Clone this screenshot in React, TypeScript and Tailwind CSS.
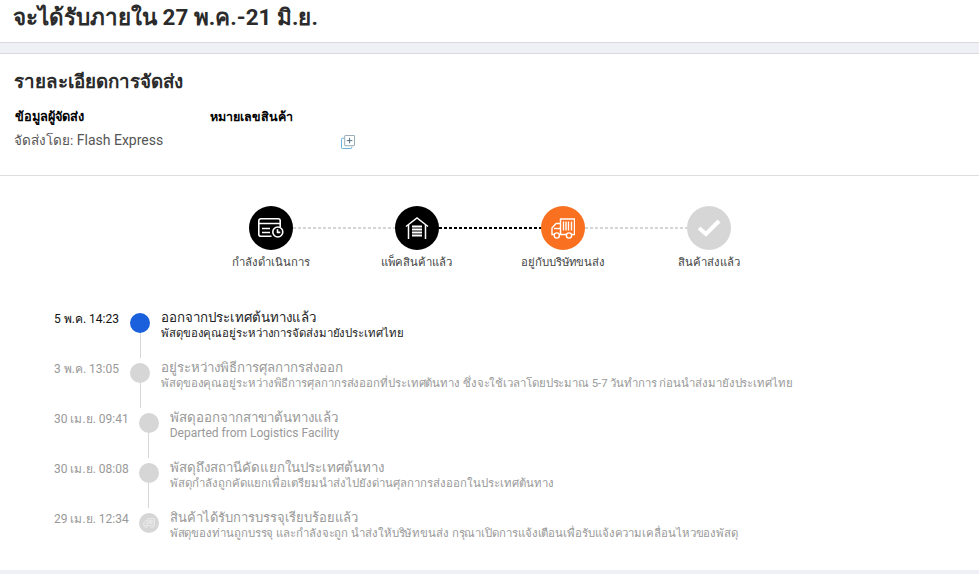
import React from 'react';

type TrackItem = {
  time: string;
  title: string;
  detail: string;
  titleClass?: string;
  detailClass?: string;
  active?: boolean;
  truck?: boolean;
};

const items: TrackItem[] = [
  {
    time: '5 พ.ค. 14:23',
    title: 'ออกจากประเทศต้นทางแล้ว',
    detail: 'พัสดุของคุณอยู่ระหว่างการจัดส่งมายังประเทศไทย',
    detailClass: 'text-[11.4px] tracking-[-0.1px]',
    active: true,
  },
  {
    time: '3 พ.ค. 13:05',
    title: 'อยู่ระหว่างพิธีการศุลกากรส่งออก',
    detail: 'พัสดุของคุณอยู่ระหว่างพิธีการศุลกากรส่งออกที่ประเทศต้นทาง ซึ่งจะใช้เวลาโดยประมาณ 5-7 วันทำการ ก่อนนำส่งมายังประเทศไทย',
    detailClass: 'text-[11.4px] tracking-[-0.09px]',
  },
  {
    time: '30 เม.ย. 09:41',
    title: 'พัสดุออกจากสาขาต้นทางแล้ว',
    detail: 'Departed from Logistics Facility',
    detailClass: 'text-[12px]',
  },
  {
    time: '30 เม.ย. 08:08',
    title: 'พัสดุถึงสถานีคัดแยกในประเทศต้นทาง',
    detail: 'พัสดุกำลังถูกคัดแยกเพื่อเตรียมนำส่งไปยังด่านศุลกากรส่งออกในประเทศต้นทาง',
    detailClass: 'text-[11.4px]',
  },
  {
    time: '29 เม.ย. 12:34',
    title: 'สินค้าได้รับการบรรจุเรียบร้อยแล้ว',
    titleClass: 'text-[13px]',
    detail: 'พัสดุของท่านถูกบรรจุ และกำลังจะถูก นำส่งให้บริษัทขนส่ง กรุณาเปิดการแจ้งเตือนเพื่อรับแจ้งความเคลื่อนไหวของพัสดุ',
    detailClass: 'text-[11.4px] tracking-[-0.085px]',
    truck: true,
  },
];

const TruckIcon = ({ className }: { className: string }) => (
  <svg viewBox="0 0 24 21" fill="none" stroke="currentColor" strokeWidth="1.4" className={className}>
    <path d="M9.5 16V1h14v15.5h-3M15.5 16.5h-7" />
    <path d="M9.5 5.5H5L1 10v6.5h2" />
    <path d="M3 10.5h6.5" />
    <path d="M12.5 3.5v9M15 3.5v9M17.5 3.5v9M20.5 3.5v9" />
    <circle cx="5.8" cy="17.5" r="2.6" />
    <circle cx="18" cy="17.5" r="2.6" />
  </svg>
);

const steps = [
  {
    label: 'กำลังดำเนินการ',
    bg: 'bg-black',
    icon: (
      <svg viewBox="0 0 26 20" fill="none" stroke="white" strokeWidth="1.6" className="w-[26px] h-[20px]">
        <path d="M13.5 18.2H2.8a2 2 0 0 1-2-2V2.8a2 2 0 0 1 2-2h17.4a2 2 0 0 1 2 2v6.5" />
        <path d="M1 5.5h21M4 10.5h8M4 14.5h8" />
        <circle cx="19.8" cy="14" r="5" />
        <path d="M19.5 11.2v3.2h2.8" />
      </svg>
    ),
  },
  {
    label: 'แพ็คสินค้าแล้ว',
    bg: 'bg-black',
    icon: (
      <svg viewBox="0 0 24 22" fill="none" stroke="white" strokeWidth="1.5" className="w-6 h-[22px]">
        <path d="M1 9.5L12 1l11 8.5" />
        <path d="M3.5 8v14M20.5 8v14" />
        <path d="M7 9.5h10M7 12.5h10M7 15.5h10M7 18.5h10" strokeWidth="1.8" />
      </svg>
    ),
  },
  {
    label: 'อยู่กับบริษัทขนส่ง',
    bg: 'bg-[#f97020]',
    icon: <TruckIcon className="w-6 h-[21px] text-white" />,
  },
  {
    label: 'สินค้าส่งแล้ว',
    bg: 'bg-[#d6d6d6]',
    icon: (
      <svg viewBox="0 0 24 18" fill="none" stroke="white" strokeWidth="4" className="w-[24px] h-[18px]">
        <path d="M2 9l7 6L22 2" />
      </svg>
    ),
  },
];

const Connector = ({ done }: { done?: boolean }) => (
  <div
    className={`h-[2px] w-[102px] ${
      done
        ? 'bg-[repeating-linear-gradient(90deg,#000_0_3px,transparent_3px_5px)]'
        : 'bg-[repeating-linear-gradient(90deg,#d6d6d6_0_3px,transparent_3px_5px)]'
    }`}
  />
);

export default function App() {
  return (
    <div className="h-[574px] overflow-hidden bg-white font-['Roboto','Noto_Sans',sans-serif] text-[#333]">
      <div className="h-[43px] border-b border-[#d9d9de] pl-[13px]">
        <h1 className="text-[22.4px] leading-[34px] font-bold text-[#2b2b2b]">จะได้รับภายใน 27 พ.ค.-21 มิ.ย.</h1>
      </div>
      <div className="h-[11px] border-b border-[#d9d9de] bg-[#eff0f5]" />

      <div className="h-[122px] border-b border-[#dedede] pl-[14px] pt-[16px]">
        <h2 className="text-[18.8px] leading-[24px] font-bold text-[#2b2b2b]">รายละเอียดการจัดส่ง</h2>
        <div className="mt-[14px] flex leading-[18px] font-bold text-black">
          <div className="w-[196px] pl-px text-[12.8px]">ข้อมูลผู้จัดส่ง</div>
          <div className="text-[12.5px]">หมายเลขสินค้า</div>
        </div>
        <div className="mt-[4px] flex items-center text-[14px] leading-[20px] text-[#555]">
          <div className="w-[327px]">
            <span className="text-[13.5px]">จัดส่งโดย:</span> Flash Express
          </div>
          <svg viewBox="0 0 15 15" fill="none" strokeWidth="1" className="mt-[4px] w-[14px] h-[14px]">
            <path d="M3.5 3.5H1.5a1 1 0 0 0-1 1v9a1 1 0 0 0 1 1h9a1 1 0 0 0 1-1v-1" stroke="#5aa9d6" />
            <rect x="4" y="0.5" width="10.5" height="11" rx="0.5" stroke="#8fa3ad" />
            <path d="M9.2 3v6M6.2 6h6" stroke="#4b6f80" />
          </svg>
        </div>
      </div>

      <div className="mt-[30px] flex items-center justify-center">
        {steps.map((step, i) => (
          <React.Fragment key={step.label}>
            {i > 0 && <Connector done={i === 2} />}
            <div className={`flex h-11 w-11 items-center justify-center rounded-full ${step.bg}`}>{step.icon}</div>
          </React.Fragment>
        ))}
      </div>
      <div className="mt-[3px] flex justify-center">
        {steps.map((step) => (
          <div key={step.label} className="w-[146px] text-center text-[11.3px] leading-[20px] text-[#444]">
            {step.label}
          </div>
        ))}
      </div>

      <div className="mt-[35px] pl-[54px]">
        {items.map((item, i) => (
          <div key={item.time} className="flex h-[50px]">
            <div className={`min-w-[66px] pt-[2px] text-[12px] leading-[18px] whitespace-nowrap ${item.active ? 'text-[#111]' : 'text-[#999]'}`}>
              {item.time}
            </div>
            <div className="ml-[10px] flex w-5 flex-col items-center pt-[5px]">
              <div className={`flex h-5 w-5 shrink-0 items-center justify-center rounded-full ${item.active ? 'bg-[#1a5fdc]' : 'bg-[#d6d6d6]'}`}>
                {item.truck && <TruckIcon className="w-3 h-[10px] text-white opacity-70" />}
              </div>
              {i < items.length - 1 && <div className="w-px flex-1 bg-[#d6d6d6]" />}
            </div>
            <div className="ml-[11px] pt-[1px]">
              <div className={`${item.titleClass ?? 'text-[13.3px]'} leading-[17px] ${item.active ? 'text-[#222]' : 'text-[#999]'}`}>{item.title}</div>
              <div className={`${item.detailClass} leading-[15px] ${item.active ? 'text-[#222]' : 'text-[#999]'}`}>{item.detail}</div>
            </div>
          </div>
        ))}
      </div>

      <div className="mt-[12px] h-1 bg-[#eff0f5]" />
    </div>
  );
}
